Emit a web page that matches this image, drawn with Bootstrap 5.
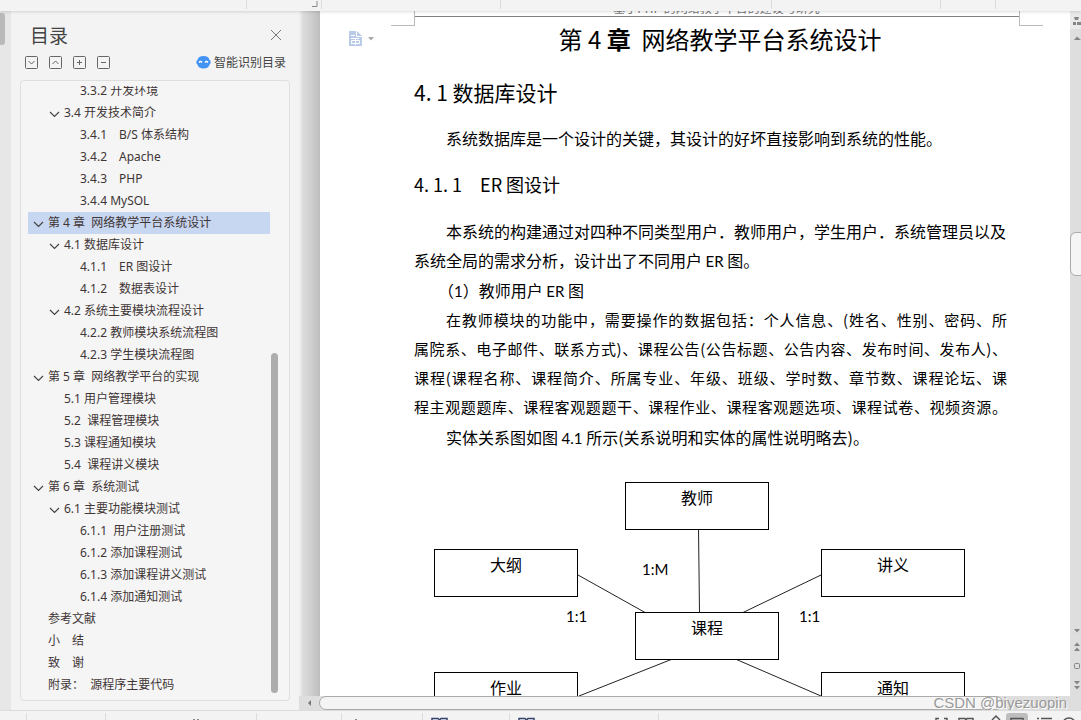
<!DOCTYPE html>
<html lang="zh-CN">
<head>
<meta charset="utf-8">
<meta name="viewport" content="width=device-width, initial-scale=1">
<title>第4章 网络教学平台系统设计</title>
<link href="https://cdn.jsdelivr.net/npm/bootstrap@5.3.0/dist/css/bootstrap.min.css" rel="stylesheet">
<style>
  body { font: 12px/22px "Noto Sans", "Noto Sans CJK SC", sans-serif; color: #3f3535; background: #f3f3f3; }
  svg { display: block; flex: none; }
  button { border: 0; background: none; padding: 0; color: inherit; }
  .topbar { height: 11px; background: #f3f3f3; box-shadow: 0 1px 3px #0002; z-index: 2; }
  .tick { border-right: 1px solid #dcdcdc; height: 9px; flex: none; }
  .rail { width: 11px; background: #e7e7e7; }
  .rail-thumb { width: 5px; height: 32px; margin-top: 2px; background: #b9b9b9; border-radius: 0 3px 3px 0; }
  .outline-pane { width: 288px; padding: 12px 9px 9px; background: #f3f3f3; }
  .pane-title { font: 19px/24px "Noto Sans CJK SC", sans-serif; padding-left: 10px; color: #444; }
  .pane-tools { height: 26px; gap: 11px; padding: 4px 4px 0 5px; color: #666; }
  .smart { gap: 3px; color: #444; font-family: "Noto Sans CJK SC", sans-serif; }
  .tree-box { border: 1px solid #dedede; border-radius: 4px; background: #f5f5f5; margin-top: 7px; padding: 5px 10px 5px 7px; }
  .tree { margin-top: -6px; padding-right: 9px; }
  .tree a { display: flex; align-items: center; height: 22px; white-space: pre; color: inherit; text-decoration: none; }
  .tree svg { margin-right: 4px; }
  .lv1 { padding-left: 20px; } .lv2 { padding-left: 36px; } .lv3 { padding-left: 52px; }
  .open.lv1 { padding-left: 5px; } .open.lv2 { padding-left: 21px; }
  .picked { background: #c7d6f1; }
  .tree-thumb { width: 7px; height: 340px; border-radius: 4px; background: #adadae; right: 11px; top: 272px; }
  .desk { width: 21px; background: linear-gradient(90deg, #ededed 0 2px, #dedede 3px, #cfcfcf 12px, #bdbdbd); }
  .sheet { background: #fff; color: #000; padding: 0 51px 0 94px; font: 16px/29px "Noto Sans CJK SC", sans-serif; }
  .running { height: 6px; border-bottom: 1px solid #808080; font-size: 12px; line-height: 16px; color: #777; white-space: pre; }
  .corner { width: 24px; height: 15px; top: 0; border-bottom: 1px solid #bbb; }
  .corner-l { left: -23px; border-right: 1px solid #bbb; }
  .corner-r { right: -24px; border-left: 1px solid #bbb; }
  .doc-tool { left: 29px; top: 20px; gap: 6px; }
  .sheet h1, .sheet h2, .sheet h3 { font-weight: 400; margin-bottom: 0; white-space: pre; }
  .sheet h1 { font-size: 24px; line-height: 32px; margin-top: 6px; padding-left: 7px; }
  .sheet h2 { font-size: 21px; line-height: 28px; margin-top: 23px; }
  .sheet h3 { font-size: 18px; line-height: 26px; margin: 18px 0 20px; }
  .sheet p { margin: 0; text-indent: 32px; white-space: nowrap; }
  .sheet p.lead-in { margin-top: 18px; }
  .sheet p.numbered { text-indent: 24px; margin-top: 1px; }
  .sheet p.dense { font-size: 15px; width: 593px; text-align: justify; text-align-last: justify; margin-bottom: 2px; }
  .ltn { font-family: Lato, sans-serif; font-size: 15px; line-height: 1; }
  .er { height: 260px; margin-top: 30px; }
  .er > * { position: absolute; }
  .entity { width: 144px; height: 48px; border: 1px solid #000; text-align: center; background: #fff; }
  .vscroll { width: 11px; background: #dedede; color: #858585; }
  .vthumb { width: 16px; height: 44px; top: 221px; left: 0; border: 1px solid #aaa; border-radius: 6px; background: #f5f5f5; }
  .hscroll { height: 14px; background: #dedede; color: #777; }
  .hthumb { flex: 1; margin: 0 78px 0 12px; border: 1px solid #aaa; border-radius: 7px; background: #f4f4f4; }
  .watermark { right: 14px; top: -5px; font: 15px/24px "Liberation Sans", sans-serif; color: #999; text-shadow: 1px 1px 0 #fff; }
  .status { height: 10px; border-top: 1px solid #dcdcdc; background: #f3f3f3; color: #555; }
</style>
</head>
<body>
<svg width="0" height="0" class="position-absolute">
  <symbol id="chev" viewBox="0 0 11 11"><path d="M1 4l4.5 4.500L10 4" fill="none" stroke="#444" stroke-width="1.200"/></symbol>
</svg>
<div class="d-flex flex-column vh-100 overflow-hidden">
  <header class="topbar d-flex flex-shrink-0 position-relative">
    <span class="tick" style="width:247px"></span>
    <svg width="74" height="9"><path d="M70 1v5.500h-5" fill="none" stroke="#888"/></svg>
    <span class="tick" style="width:1px"></span><span class="tick" style="width:179px"></span><span class="tick" style="width:271px"></span><span class="tick" style="width:169px"></span><span class="tick" style="width:55px"></span>
  </header>

  <div class="d-flex flex-fill overflow-hidden">
    <div class="rail flex-shrink-0"><div class="rail-thumb"></div></div>
    <aside class="outline-pane flex-shrink-0 d-flex flex-column">
      <div class="d-flex justify-content-between align-items-center">
        <div class="pane-title">目录</div>
        <button aria-label="关闭" class="me-2"><svg width="12" height="12"><path d="M1 1l10 10M11 1L1 11" stroke="#777" fill="none"/></svg></button>
      </div>
      <div class="pane-tools d-flex align-items-center">
        <button aria-label="全部展开"><svg width="13" height="13" fill="none" stroke="currentColor"><rect x=".5" y=".5" width="12" height="12" rx="1"/><path d="M3.500 5l3 3 3-3"/></svg></button>
        <button aria-label="全部收起"><svg width="13" height="13" fill="none" stroke="currentColor"><rect x=".5" y=".5" width="12" height="12" rx="1"/><path d="M3.500 8l3-3 3 3"/></svg></button>
        <button aria-label="展开一级"><svg width="13" height="13" fill="none" stroke="currentColor"><rect x=".5" y=".5" width="12" height="12" rx="1"/><path d="M4 6.500h5M6.500 4v5"/></svg></button>
        <button aria-label="收起一级"><svg width="13" height="13" fill="none" stroke="currentColor"><rect x=".5" y=".5" width="12" height="12" rx="1"/><path d="M4 6.500h5"/></svg></button>
        <button class="smart d-flex align-items-center ms-auto"><svg width="15" height="13"><path d="M7.500 0C11 0 13 1.500 13.500 4c1.500.500 1.500 4 0 4.500C13 11 11 12.500 7.500 12.500S2 11 1.500 8.500C0 8 0 4.500 1.500 4 2 1.500 4 0 7.500 0z" fill="#4393f5"/><path d="M3 6.500q1.500-2 3 0M9 6.500q1.500-2 3 0" stroke="#fff" fill="none" stroke-width="1.300"/></svg><span>智能识别目录</span></button>
      </div>
      <div class="tree-box flex-fill position-relative overflow-hidden d-flex flex-column">
        <div class="overflow-hidden">
        <nav class="tree">
          <a href="#" class="lv3">3.3.2 开发环境</a>
          <a href="#" class="lv2 open"><svg width="11" height="11"><use href="#chev"/></svg>3.4 开发技术简介</a>
          <a href="#" class="lv3">3.4.1　B/S 体系结构</a>
          <a href="#" class="lv3">3.4.2　Apache</a>
          <a href="#" class="lv3">3.4.3　PHP</a>
          <a href="#" class="lv3">3.4.4 MySOL</a>
          <a href="#" class="lv1 open picked"><svg width="11" height="11"><use href="#chev"/></svg>第 4 章  网络教学平台系统设计</a>
          <a href="#" class="lv2 open"><svg width="11" height="11"><use href="#chev"/></svg>4.1 数据库设计</a>
          <a href="#" class="lv3">4.1.1　ER 图设计</a>
          <a href="#" class="lv3">4.1.2　数据表设计</a>
          <a href="#" class="lv2 open"><svg width="11" height="11"><use href="#chev"/></svg>4.2 系统主要模块流程设计</a>
          <a href="#" class="lv3">4.2.2 教师模块系统流程图</a>
          <a href="#" class="lv3">4.2.3 学生模块流程图</a>
          <a href="#" class="lv1 open"><svg width="11" height="11"><use href="#chev"/></svg>第 5 章  网络教学平台的实现</a>
          <a href="#" class="lv2">5.1 用户管理模块</a>
          <a href="#" class="lv2">5.2  课程管理模块</a>
          <a href="#" class="lv2">5.3 课程通知模块</a>
          <a href="#" class="lv2">5.4  课程讲义模块</a>
          <a href="#" class="lv1 open"><svg width="11" height="11"><use href="#chev"/></svg>第 6 章  系统测试</a>
          <a href="#" class="lv2 open"><svg width="11" height="11"><use href="#chev"/></svg>6.1 主要功能模块测试</a>
          <a href="#" class="lv3">6.1.1  用户注册测试</a>
          <a href="#" class="lv3">6.1.2 添加课程测试</a>
          <a href="#" class="lv3">6.1.3 添加课程讲义测试</a>
          <a href="#" class="lv3">6.1.4 添加通知测试</a>
          <a href="#" class="lv1">参考文献</a>
          <a href="#" class="lv1">小　结</a>
          <a href="#" class="lv1">致　谢</a>
          <a href="#" class="lv1">附录：  源程序主要代码</a>
        </nav>
        </div>
        <div class="tree-thumb position-absolute"></div>
      </div>
    </aside>

    <div class="flex-fill d-flex flex-column overflow-hidden">
      <div class="d-flex flex-fill overflow-hidden">
        <div class="desk flex-shrink-0"></div>
        <main class="sheet flex-fill position-relative overflow-hidden">
          <div class="doc-tool position-absolute d-flex align-items-center"><svg width="13" height="15"><path d="M0 0h8l5 5v10H0z" fill="#b9cbe8"/><path d="M7.500 0v5.500H13M2 4.500h4M2 7.500h8M2.500 9.500h8v3h-8zM6.500 7v7" stroke="#fff" fill="none"/></svg><svg width="7" height="4"><path d="M0 0h6L3 3.500z" fill="#aaa"/></svg></div>
          <div class="position-relative">
            <div class="running d-flex justify-content-center align-items-end overflow-hidden">基于PHP 的网络教学平台的建设与研究</div>
            <div class="corner corner-l position-absolute"></div>
            <div class="corner corner-r position-absolute"></div>
          </div>
          <h1 class="text-center">第 4 <b>章</b>  网络教学平台系统设计</h1>
          <h2>4. 1 数据库设计</h2>
          <p class="lead-in">系统数据库是一个设计的关键，其设计的好坏直接影响到系统的性能。</p>
          <h3>4. 1. 1　ER 图设计</h3>
          <p>本系统的构建通过对四种不同类型用户．教师用户，学生用户．系统管理员以及<br>系统全局的需求分析，设计出了不同用户 <span class="ltn">ER</span> 图。</p>
          <p class="numbered">（<span class="ltn">1</span>）教师用户 <span class="ltn">ER</span> 图</p>
          <p class="dense">在教师模块的功能中，需要操作的数据包括：个人信息、(姓名、性别、密码、所<br>属院系、电子邮件、联系方式)、课程公告(公告标题、公告内容、发布时间、发布人)、<br>课程(课程名称、课程简介、所属专业、年级、班级、学时数、章节数、课程论坛、课<br>程主观题题库、课程客观题题干、课程作业、课程客观题选项、课程试卷、视频资源。</p>
          <p>实体关系图如图 <span class="ltn">4.1</span> 所示(关系说明和实体的属性说明略去)。</p>
          <div class="er position-relative">
            <svg width="560" height="260" fill="none" stroke="#222"><path d="M284.500 46l1 85M164 93l68 38M407 93l-79 38M261 176l-96 38M319 176l88 38"/></svg>
            <div class="entity" style="left:211px;top:0">教师</div>
            <div class="entity" style="left:20px;top:67px">大纲</div>
            <div class="entity" style="left:407px;top:67px">讲义</div>
            <div class="entity" style="left:221px;top:130px">课程</div>
            <div class="entity" style="left:20px;top:190px">作业</div>
            <div class="entity" style="left:407px;top:190px">通知</div>
            <span class="ltn" style="left:228px;top:80px">1:M</span>
            <span class="ltn" style="left:152px;top:127px">1:1</span>
            <span class="ltn" style="left:385px;top:127px">1:1</span>
          </div>
        </main>
        <div class="vscroll flex-shrink-0 position-relative overflow-hidden">
          <svg width="11" height="685" fill="currentColor"><path d="M0 0h11v18H0z" fill="#e9e9e9"/><path d="M4 6h5l-1 3H5zM3 11h3v3H3zM7 11h4v3H7zM4 29l3-3.500 4 3.500zM4 618h6l-3 3.500zM4 635l3-3.500 3 3.500zM4 640l3-3.500 3 3.500zM4 670h6l-3 3.500zM4 675h6l-3 3.500z"/><rect x="4.500" y="652.500" width="5" height="5" rx="1" fill="none" stroke="currentColor"/></svg>
          <div class="vthumb position-absolute"></div>
        </div>
      </div>
      <div class="hscroll d-flex flex-shrink-0 position-relative">
        <svg width="12" height="14"><path d="M12 4v6L9 7z" fill="currentColor"/></svg>
        <div class="hthumb ms-2"></div>
        <div class="watermark position-absolute">CSDN @biyezuopin</div>
      </div>
    </div>
  </div>

  <footer class="status d-flex flex-shrink-0 overflow-hidden">
    <svg width="660" height="9" fill="none"><path d="M26.500 2v7M105.500 2v7M256.500 2v7M341.500 2v7M422.500 2v7M509.500 2v7M658.500 2v7" stroke="#dcdcdc"/><path d="M432 9V7.500h6l1.500 1.500 1.500-1.500h6V9M519 9V7.500h6l1.500 1.500 1.500-1.500h6V9" stroke="#33436b" stroke-width="1.500"/><path d="M193 8.500h2m2 0h2M355 8.500h2" stroke="#888"/></svg>
    <svg width="150" height="9" class="ms-auto" fill="none" stroke="currentColor"><rect x="75" y="2" width="22" height="12" rx="3" fill="#bdbdbd" stroke="none"/><path d="M5 9V7.500h3M13 7.500h3V9M28 9V7.500h6l1 1.500 1-1.500h6V9M61 9l4-4 4 4M80 9V7.500h12V9M106 7.500h2M110 7.500h11M133 9q5-4 10 0" stroke-width="1.500"/></svg>
  </footer>
</div>
<script src="https://cdn.jsdelivr.net/npm/bootstrap@5.3.0/dist/js/bootstrap.bundle.min.js"></script>
</body>
</html>
